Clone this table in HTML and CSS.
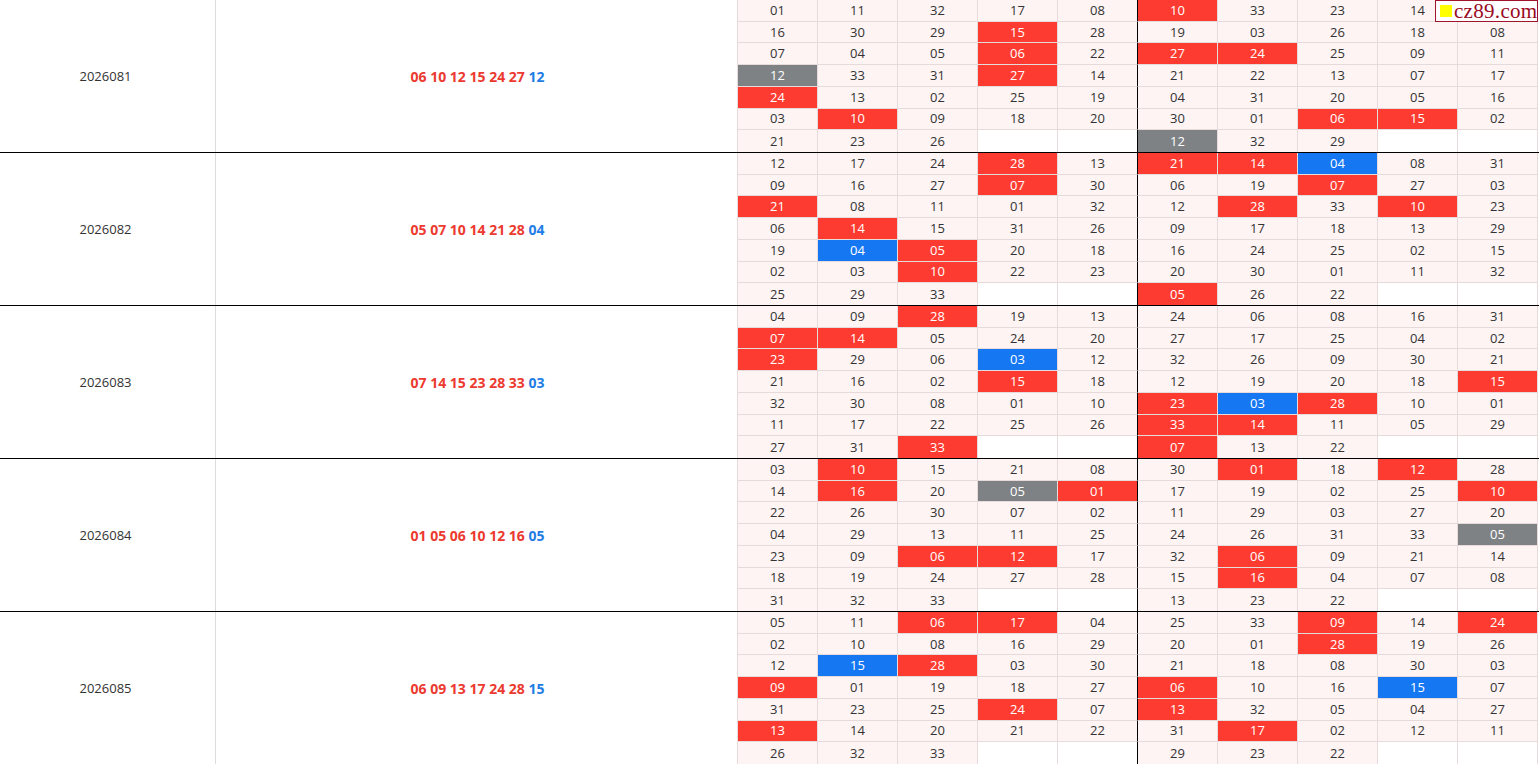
FILE: index.html
```html
<!DOCTYPE html>
<html lang="zh">
<head>
<meta charset="utf-8">
<title>cz89</title>
<link rel="stylesheet" href="styles.css">
</head>
<body>
<div class="table">

<div class="block">
  <div class="period">2026081</div>
  <div class="draw"><p class="nums"><span class="red">06 10 12 15 24 27</span> <span class="blue">12</span></p></div>
  <div class="grid">
    <span>01</span><span>11</span><span>32</span><span>17</span><span>08</span><span class="r">10</span><span>33</span><span>23</span><span>14</span><span></span>
    <span>16</span><span>30</span><span>29</span><span class="r">15</span><span>28</span><span>19</span><span>03</span><span>26</span><span>18</span><span>08</span>
    <span>07</span><span>04</span><span>05</span><span class="r">06</span><span>22</span><span class="r">27</span><span class="r">24</span><span>25</span><span>09</span><span>11</span>
    <span class="g">12</span><span>33</span><span>31</span><span class="r">27</span><span>14</span><span>21</span><span>22</span><span>13</span><span>07</span><span>17</span>
    <span class="r">24</span><span>13</span><span>02</span><span>25</span><span>19</span><span>04</span><span>31</span><span>20</span><span>05</span><span>16</span>
    <span>03</span><span class="r">10</span><span>09</span><span>18</span><span>20</span><span>30</span><span>01</span><span class="r">06</span><span class="r">15</span><span>02</span>
    <span>21</span><span>23</span><span>26</span><span class="e"></span><span class="e"></span><span class="g">12</span><span>32</span><span>29</span><span class="e"></span><span class="e"></span>
  </div>
</div>

<div class="block">
  <div class="period">2026082</div>
  <div class="draw"><p class="nums"><span class="red">05 07 10 14 21 28</span> <span class="blue">04</span></p></div>
  <div class="grid">
    <span>12</span><span>17</span><span>24</span><span class="r">28</span><span>13</span><span class="r">21</span><span class="r">14</span><span class="b">04</span><span>08</span><span>31</span>
    <span>09</span><span>16</span><span>27</span><span class="r">07</span><span>30</span><span>06</span><span>19</span><span class="r">07</span><span>27</span><span>03</span>
    <span class="r">21</span><span>08</span><span>11</span><span>01</span><span>32</span><span>12</span><span class="r">28</span><span>33</span><span class="r">10</span><span>23</span>
    <span>06</span><span class="r">14</span><span>15</span><span>31</span><span>26</span><span>09</span><span>17</span><span>18</span><span>13</span><span>29</span>
    <span>19</span><span class="b">04</span><span class="r">05</span><span>20</span><span>18</span><span>16</span><span>24</span><span>25</span><span>02</span><span>15</span>
    <span>02</span><span>03</span><span class="r">10</span><span>22</span><span>23</span><span>20</span><span>30</span><span>01</span><span>11</span><span>32</span>
    <span>25</span><span>29</span><span>33</span><span class="e"></span><span class="e"></span><span class="r">05</span><span>26</span><span>22</span><span class="e"></span><span class="e"></span>
  </div>
</div>

<div class="block">
  <div class="period">2026083</div>
  <div class="draw"><p class="nums"><span class="red">07 14 15 23 28 33</span> <span class="blue">03</span></p></div>
  <div class="grid">
    <span>04</span><span>09</span><span class="r">28</span><span>19</span><span>13</span><span>24</span><span>06</span><span>08</span><span>16</span><span>31</span>
    <span class="r">07</span><span class="r">14</span><span>05</span><span>24</span><span>20</span><span>27</span><span>17</span><span>25</span><span>04</span><span>02</span>
    <span class="r">23</span><span>29</span><span>06</span><span class="b">03</span><span>12</span><span>32</span><span>26</span><span>09</span><span>30</span><span>21</span>
    <span>21</span><span>16</span><span>02</span><span class="r">15</span><span>18</span><span>12</span><span>19</span><span>20</span><span>18</span><span class="r">15</span>
    <span>32</span><span>30</span><span>08</span><span>01</span><span>10</span><span class="r">23</span><span class="b">03</span><span class="r">28</span><span>10</span><span>01</span>
    <span>11</span><span>17</span><span>22</span><span>25</span><span>26</span><span class="r">33</span><span class="r">14</span><span>11</span><span>05</span><span>29</span>
    <span>27</span><span>31</span><span class="r">33</span><span class="e"></span><span class="e"></span><span class="r">07</span><span>13</span><span>22</span><span class="e"></span><span class="e"></span>
  </div>
</div>

<div class="block">
  <div class="period">2026084</div>
  <div class="draw"><p class="nums"><span class="red">01 05 06 10 12 16</span> <span class="blue">05</span></p></div>
  <div class="grid">
    <span>03</span><span class="r">10</span><span>15</span><span>21</span><span>08</span><span>30</span><span class="r">01</span><span>18</span><span class="r">12</span><span>28</span>
    <span>14</span><span class="r">16</span><span>20</span><span class="g">05</span><span class="r">01</span><span>17</span><span>19</span><span>02</span><span>25</span><span class="r">10</span>
    <span>22</span><span>26</span><span>30</span><span>07</span><span>02</span><span>11</span><span>29</span><span>03</span><span>27</span><span>20</span>
    <span>04</span><span>29</span><span>13</span><span>11</span><span>25</span><span>24</span><span>26</span><span>31</span><span>33</span><span class="g">05</span>
    <span>23</span><span>09</span><span class="r">06</span><span class="r">12</span><span>17</span><span>32</span><span class="r">06</span><span>09</span><span>21</span><span>14</span>
    <span>18</span><span>19</span><span>24</span><span>27</span><span>28</span><span>15</span><span class="r">16</span><span>04</span><span>07</span><span>08</span>
    <span>31</span><span>32</span><span>33</span><span class="e"></span><span class="e"></span><span>13</span><span>23</span><span>22</span><span class="e"></span><span class="e"></span>
  </div>
</div>

<div class="block">
  <div class="period">2026085</div>
  <div class="draw"><p class="nums"><span class="red">06 09 13 17 24 28</span> <span class="blue">15</span></p></div>
  <div class="grid">
    <span>05</span><span>11</span><span class="r">06</span><span class="r">17</span><span>04</span><span>25</span><span>33</span><span class="r">09</span><span>14</span><span class="r">24</span>
    <span>02</span><span>10</span><span>08</span><span>16</span><span>29</span><span>20</span><span>01</span><span class="r">28</span><span>19</span><span>26</span>
    <span>12</span><span class="b">15</span><span class="r">28</span><span>03</span><span>30</span><span>21</span><span>18</span><span>08</span><span>30</span><span>03</span>
    <span class="r">09</span><span>01</span><span>19</span><span>18</span><span>27</span><span class="r">06</span><span>10</span><span>16</span><span class="b">15</span><span>07</span>
    <span>31</span><span>23</span><span>25</span><span class="r">24</span><span>07</span><span class="r">13</span><span>32</span><span>05</span><span>04</span><span>27</span>
    <span class="r">13</span><span>14</span><span>20</span><span>21</span><span>22</span><span>31</span><span class="r">17</span><span>02</span><span>12</span><span>11</span>
    <span>26</span><span>32</span><span>33</span><span class="e"></span><span class="e"></span><span>29</span><span>23</span><span>22</span><span class="e"></span><span class="e"></span>
  </div>
</div>

</div>
<div class="mark"><span class="sq"></span><span class="mtxt">cz89.com</span></div>
</body>
</html>
```

FILE: styles.css
```css
html, body {
  margin: 0;
  padding: 0;
  background: #fff;
}
body {
  font-family: "Open Sans", "Noto Sans", "Liberation Sans", sans-serif;
  color: #333;
  width: 1539px;
  height: 764px;
  overflow: hidden;
  position: relative;
}
.table {
  display: flex;
  flex-direction: column;
}
.block {
  display: grid;
  grid-template-columns: 216px 521px 801px;
  height: 153px;
  box-sizing: border-box;
  border-bottom: 1px solid #000;
}
.period {
  border-right: 1px solid #dcdcdc;
  display: flex;
  align-items: center;
  justify-content: center;
  font-size: 13px;
  color: #333;
  padding-right: 4px;
}
.draw {
  display: flex;
  align-items: center;
  justify-content: center;
  padding-left: 2px;
}
.nums {
  margin: 0;
  font-size: 14px;
  font-weight: 700;
  white-space: pre;
}
.red { color: #ec3a30; }
.blue { color: #1f7de6; }
.grid {
  display: grid;
  grid-template-columns: repeat(10, 80px);
  grid-template-rows: repeat(7, 1fr);
  border-left: 1px solid #e6dada;
  height: 152px;
}
.grid span {
  box-sizing: border-box;
  border-right: 1px solid #e6dada;
  border-bottom: 1px solid #e6dada;
  background: #fdf4f3;
  display: flex;
  align-items: center;
  justify-content: center;
  font-size: 13px;
  color: #333;
  line-height: 1;
}
.grid span:nth-child(10n+5) {
  border-right-color: #000;
}
.grid span:nth-last-child(-n+10) {
  border-bottom: none;
}
.grid span.r {
  background: #fe3b30;
  color: #fff;
}
.grid span.b {
  background: #1677f2;
  color: #fff;
}
.grid span.g {
  background: #7e8285;
  color: #fff;
}
.grid span.e {
  background: #fff;
}
.mark {
  position: absolute;
  top: 0;
  left: 1435px;
  width: 103px;
  height: 22px;
  box-sizing: border-box;
  border: 1px solid #a0142c;
  background: #fff;
  display: flex;
  align-items: center;
  gap: 2px;
  padding-left: 4px;
  font-family: "Liberation Serif", "DejaVu Serif", serif;
  font-size: 21px;
  color: #9a0a22;
  line-height: 1;
}
.sq {
  width: 12px;
  height: 12px;
  background: #ffff00;
  flex: none;
}
.mtxt {
  letter-spacing: 0.3px;
}
```
